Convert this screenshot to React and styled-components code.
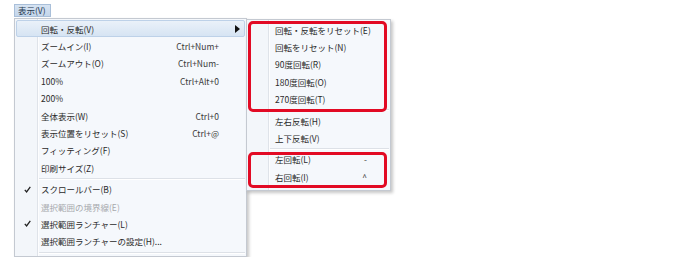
import styled, { createGlobalStyle } from 'styled-components';

const GlobalStyle = createGlobalStyle`
  body {
    margin: 0;
    background: #ffffff;
    font-family: "Noto Sans CJK JP", "Noto Sans", sans-serif;
    color: #2a2a2a;
  }
`;

const Page = styled.div`
  padding: 4px 0 0 14px;
`;

const MenuBarButton = styled.div`
  width: 37px;
  height: 13px;
  box-sizing: border-box;
  border: 1px solid #a9bfd9;
  background: linear-gradient(#d6e3f2, #c4d6eb);
  font-size: 8.5px;
  line-height: 11px;
  padding-left: 3px;
  color: #24384f;
`;

const Row = styled.div`
  display: flex;
  align-items: flex-start;
`;

const Menu = styled.div`
  position: relative;
  box-sizing: border-box;
  width: ${(p) => p.$width}px;
  margin-top: ${(p) => p.$top}px;
  margin-left: ${(p) => p.$left || 0}px;
  padding: 1px 1px ${(p) => p.$bottom}px;
  border: 1px solid #c4c9d1;
  background: linear-gradient(
    90deg,
    #f3f6fa 0 ${(p) => p.$gutter}px,
    #dfe3e9 ${(p) => p.$gutter}px ${(p) => p.$gutter + 1}px,
    #fdfdfe ${(p) => p.$gutter + 1}px ${(p) => p.$gutter + 2}px,
    #f5f8fc ${(p) => p.$gutter + 2}px
  );
  box-shadow: 2px 2px 3px rgba(0, 0, 0, 0.22);
  font-size: 8.5px;
`;

const Item = styled.div`
  display: grid;
  grid-template-columns: ${(p) => p.$pad}px 1fr auto;
  align-items: center;
  height: 17.4px;
  box-sizing: border-box;
  padding-right: ${(p) => p.$right}px;
  color: ${(p) => (p.$disabled ? '#a7a9ad' : '#2a2a2a')};
  border: 1px solid ${(p) => (p.$active ? '#bdd1e8' : 'transparent')};
  border-radius: 2px;
  background: ${(p) =>
    p.$active ? 'linear-gradient(#eaf1f9, #d6e4f3)' : 'transparent'};
  white-space: nowrap;
`;

const Check = styled.span`
  display: flex;
  justify-content: center;
  padding-right: 4px;
`;

const Shortcut = styled.span`
  color: #3a3a3a;
`;

const Arrow = styled.svg`
  display: block;
`;

const Separator = styled.div`
  display: flex;
  align-items: center;
  height: 4px;
  margin-left: ${(p) => p.$inset}px;

  &::before {
    content: '';
    flex: 1;
    height: 1px;
    background: #dde1e7;
    box-shadow: 0 1px 0 #ffffff;
  }
`;

const Highlight = styled.div`
  position: absolute;
  left: 1px;
  top: ${(p) => p.$top}px;
  width: 139px;
  height: ${(p) => p.$height}px;
  box-sizing: border-box;
  border: 3px solid #e20a24;
  border-radius: 5px;
  pointer-events: none;
`;

const CheckMark = () => (
  <svg width="7" height="7" viewBox="0 0 7 7">
    <path d="M0.8 3.8 L2.6 5.9 L6.3 0.8" fill="none" stroke="#222" strokeWidth="1.3" />
  </svg>
);

const mainItems = [
  { label: '回転・反転(V)', active: true, sub: true },
  { label: 'ズームイン(I)', key: 'Ctrl+Num+' },
  { label: 'ズームアウト(O)', key: 'Ctrl+Num-' },
  { label: '100%', key: 'Ctrl+Alt+0' },
  { label: '200%' },
  { label: '全体表示(W)', key: 'Ctrl+0' },
  { label: '表示位置をリセット(S)', key: 'Ctrl+@' },
  { label: 'フィッティング(F)' },
  { label: '印刷サイズ(Z)' },
  { sep: true },
  { label: 'スクロールバー(B)', checked: true },
  { label: '選択範囲の境界線(E)', disabled: true },
  { label: '選択範囲ランチャー(L)', checked: true },
  { label: '選択範囲ランチャーの設定(H)...' },
  { sep: true },
];

const subItems = [
  { label: '回転・反転をリセット(E)' },
  { label: '回転をリセット(N)' },
  { label: '90度回転(R)' },
  { label: '180度回転(O)' },
  { label: '270度回転(T)' },
  { sep: true },
  { label: '左右反転(H)' },
  { label: '上下反転(V)' },
  { sep: true },
  { label: '左回転(L)', key: '-' },
  { label: '右回転(I)', key: '^' },
];

function MenuList({ items, pad, right, inset }) {
  return items.map((it, i) =>
    it.sep ? (
      <Separator key={i} $inset={inset} />
    ) : (
      <Item
        key={i}
        $pad={pad}
        $right={it.sub ? 4 : right}
        $active={it.active}
        $disabled={it.disabled}
      >
        <Check>{it.checked && <CheckMark />}</Check>
        <span>{it.label}</span>
        {it.sub ? (
          <Arrow width="5" height="8" viewBox="0 0 5 8">
            <path d="M0 0 L5 4 L0 8 Z" fill="#111" />
          </Arrow>
        ) : (
          <Shortcut>{it.key}</Shortcut>
        )}
      </Item>
    )
  );
}

export default function App() {
  return (
    <Page>
      <GlobalStyle />
      <MenuBarButton>表示(V)</MenuBarButton>
      <Row>
        <Menu $width={233} $top={1} $bottom={2} $gutter={22}>
          <MenuList items={mainItems} pad={24} right={25} inset={23} />
        </Menu>
        <Menu $width={145} $top={2} $left={-1} $bottom={4} $gutter={21}>
          <MenuList items={subItems} pad={26} right={21} inset={22} />
          <Highlight $top={1} $height={91} />
          <Highlight $top={132} $height={36} />
        </Menu>
      </Row>
    </Page>
  );
}
